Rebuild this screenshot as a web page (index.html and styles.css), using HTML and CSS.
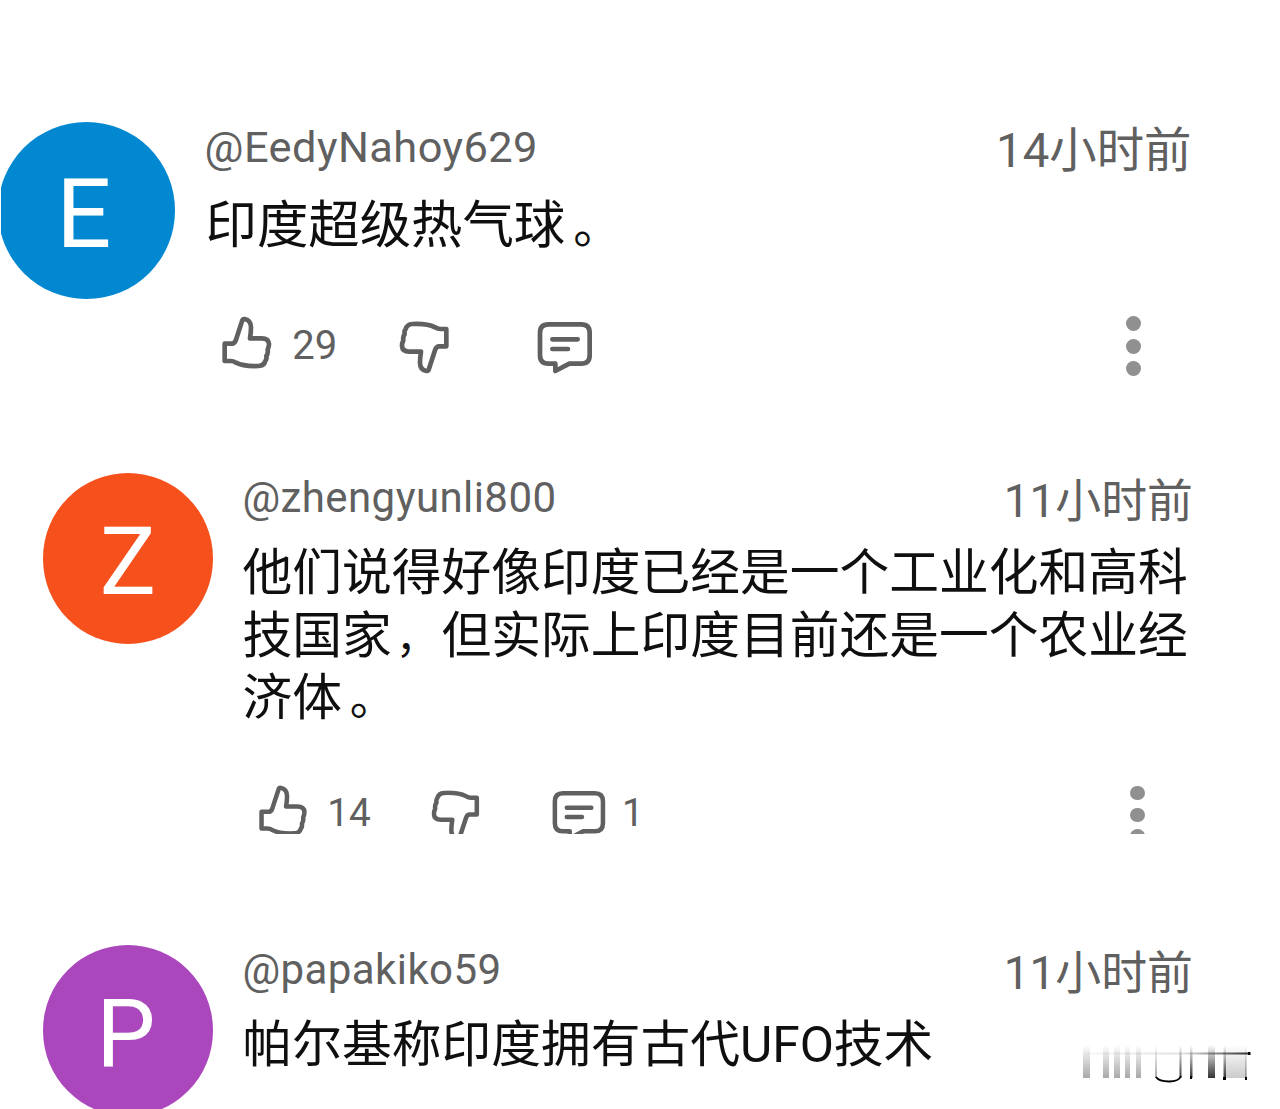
FILE: index.html
```html
<!DOCTYPE html>
<html lang="zh-CN">
<head>
<meta charset="UTF-8">
<title>评论</title>
<link rel="stylesheet" href="styles.css">
</head>
<body>
<!-- shared icons -->
<svg class="sprite">
  <symbol id="like" viewBox="63 43 153 162">
    <path d="M74 181V129H97Q104 128 107 120L126 62Q127 54 134 55Q153 59 153 80Q153 95 150 113H185Q206 113 207 130Q207 139 203 147Q205 158 199 166Q201 175 196 181Q192 195 176 196Q130 198 108 186Q100 181 92 181Z"/>
  </symbol>
  <symbol id="reply" viewBox="1010 60 174 165">
    <path d="M1066 191H1047Q1022 191 1022 166V98Q1022 73 1047 73H1146Q1171 73 1171 98V166Q1171 191 1146 191H1110L1068 213V191M1059 118H1135M1059 147H1106"/>
  </symbol>
</svg>

<main class="comments">
  <article class="comment first">
    <div class="avatar blue"><span>E</span></div>
    <div class="content">
      <header><span class="name">@EedyNahoy629</span><time>14小时前</time></header>
      <p class="text">印度超级热气球<span class="stop">。</span></p>
      <div class="actions">
        <svg class="icon like"><use href="#like"/></svg>
        <span class="count">29</span>
        <svg class="icon dislike"><use href="#like"/></svg>
        <svg class="icon reply"><use href="#reply"/></svg>
        <div class="menu"><i></i><i></i><i></i></div>
      </div>
    </div>
  </article>

  <article class="comment second">
    <div class="avatar orange"><span>Z</span></div>
    <div class="content">
      <header><span class="name">@zhengyunli800</span><time>11小时前</time></header>
      <p class="text">他们说得好像印度已经是一个工业化和高科技国家<span class="comma">，</span>但实际上印度目前还是一个农业经济体<span class="stop">。</span></p>
      <div class="actions">
        <svg class="icon like"><use href="#like"/></svg>
        <span class="count">14</span>
        <svg class="icon dislike"><use href="#like"/></svg>
        <svg class="icon reply"><use href="#reply"/></svg>
        <span class="count replies">1</span>
        <div class="menu"><i></i><i></i><i></i></div>
      </div>
    </div>
  </article>

  <article class="comment third">
    <div class="avatar purple"><span>P</span></div>
    <div class="content">
      <header><span class="name">@papakiko59</span><time>11小时前</time></header>
      <p class="text">帕尔基称印度拥有古代UFO技术</p>
    </div>
  </article>
</main>

<!-- faded corner mark -->
<svg class="mark" viewBox="0 0 220 89">
  <defs>
    <linearGradient id="light" x1="0" y1="0" x2="0" y2="1"><stop offset="0" stop-color="#000" stop-opacity="0"/><stop offset="1" stop-color="#000" stop-opacity=".34"/></linearGradient>
    <linearGradient id="dark" x1="0" y1="0" x2="0" y2="1"><stop offset="0" stop-color="#000" stop-opacity="0"/><stop offset="1" stop-color="#000" stop-opacity=".8"/></linearGradient>
    <linearGradient id="bar" x1="0" y1="0" x2="1" y2="0"><stop offset="0" stop-color="#000" stop-opacity=".03"/><stop offset=".6" stop-color="#000" stop-opacity=".12"/><stop offset="1" stop-color="#000" stop-opacity=".8"/></linearGradient>
  </defs>
  <g fill="url(#light)">
    <rect x="23" y="25" width="7" height="33"/>
    <rect x="43" y="25" width="6" height="33"/>
    <rect x="54" y="25" width="6" height="33"/>
    <rect x="65" y="25" width="5" height="33"/>
    <rect x="76" y="25" width="5" height="33"/>
    <rect x="95" y="25" width="2" height="33"/>
    <rect x="166" y="25" width="20" height="33" opacity=".6"/>
  </g>
  <g fill="url(#dark)">
    <rect x="119.500" y="25" width="2" height="33"/>
    <rect x="130" y="25" width="2.500" height="33"/>
    <rect x="148" y="25" width="7" height="33"/>
    <rect x="163.500" y="25" width="2.500" height="33"/>
    <rect x="185" y="25" width="2" height="33" opacity=".4"/>
  </g>
  <rect x="25" y="32.500" width="165" height="2" fill="url(#bar)"/>
  <path d="M96 57Q99 61.500 109 61.500T121 56" fill="none" stroke="#000" stroke-width="1.800"/>
  <path d="M130 56h2v3h-2zM163 57h3v3h-3zM185 57h2v3h-2zM188 32h2.500v3H188z"/>
</svg>
</body>
</html>
```
FILE: styles.css
```css
body{margin:0;background:#fff;font-family:Roboto,"Noto Sans CJK SC",sans-serif;color:#0f0f0f;}
.sprite{display:none;}
.comments{height:1109px;overflow:hidden;}

.comment{display:flex;box-sizing:border-box;overflow:hidden;font-size:9.68px;padding-left:42.5px;}
.comment.first{font-size:10px;height:440px;margin-left:1px;padding:122px 0 0 0;}
.comment.second{height:394px;padding-top:33px;}
.comment.third{height:275px;padding-top:111px;}

.avatar{flex:none;box-sizing:border-box;width:17.65em;height:17.65em;border-radius:50%;color:#fff;text-align:center;}
.first .avatar{margin-left:-3px;padding-right:5px;}
.third .avatar{padding-right:4px;}
.avatar span{display:block;font-size:9.7em;line-height:1.9;}
.blue{background:#0288d1;}
.orange{background:#f6511d;}
.purple{background:#ab47bc;}

.content{width:98.2em;margin-left:3em;}
.first .content{width:98.7em;}
header{display:flex;justify-content:space-between;height:7.15em;color:#606060;}
.name{font-size:4.34em;line-height:1.21;letter-spacing:.01em;}
time{font-size:4.74em;line-height:1.24;}
.text{margin:0;font-size:5.14em;line-height:1.257;width:19.4em;}
.first .text{padding-left:1px;}
.comma,.stop{display:inline-block;width:1em;line-height:1;text-indent:.1em;}
.comma{font-size:.85em;width:1.176em;}
.stop{font-size:.92em;text-indent:.17em;width:1.2em;}

.actions{display:flex;align-items:flex-start;height:7em;margin-top:5.65em;padding-left:1.6em;color:#606060;}
.icon{flex:none;fill:none;stroke:#606060;stroke-width:14;stroke-linejoin:round;stroke-linecap:round;}
.like,.dislike{width:5.1em;height:5.4em;}
.dislike{transform:rotate(180deg);margin-top:.6em;}
.reply{width:5.8em;height:5.5em;margin:.5em 0 0 8.6em;}
.second .reply{margin-left:7.35em;}
.count{font-size:4em;line-height:1.2;width:2.67em;margin:.18em 0 0 .52em;}
.second .count{margin-top:.14em;}
.second .replies{margin-left:.38em;}
.menu{display:flex;flex-direction:column;gap:.75em;margin-left:auto;margin-right:5.1em;margin-top:.15em;}
.second .menu{margin-right:5em;}
.menu i{width:1.5em;height:1.5em;border-radius:50%;background:#909090;}

.mark{position:absolute;left:1060px;top:1020px;width:220px;height:89px;}
```
